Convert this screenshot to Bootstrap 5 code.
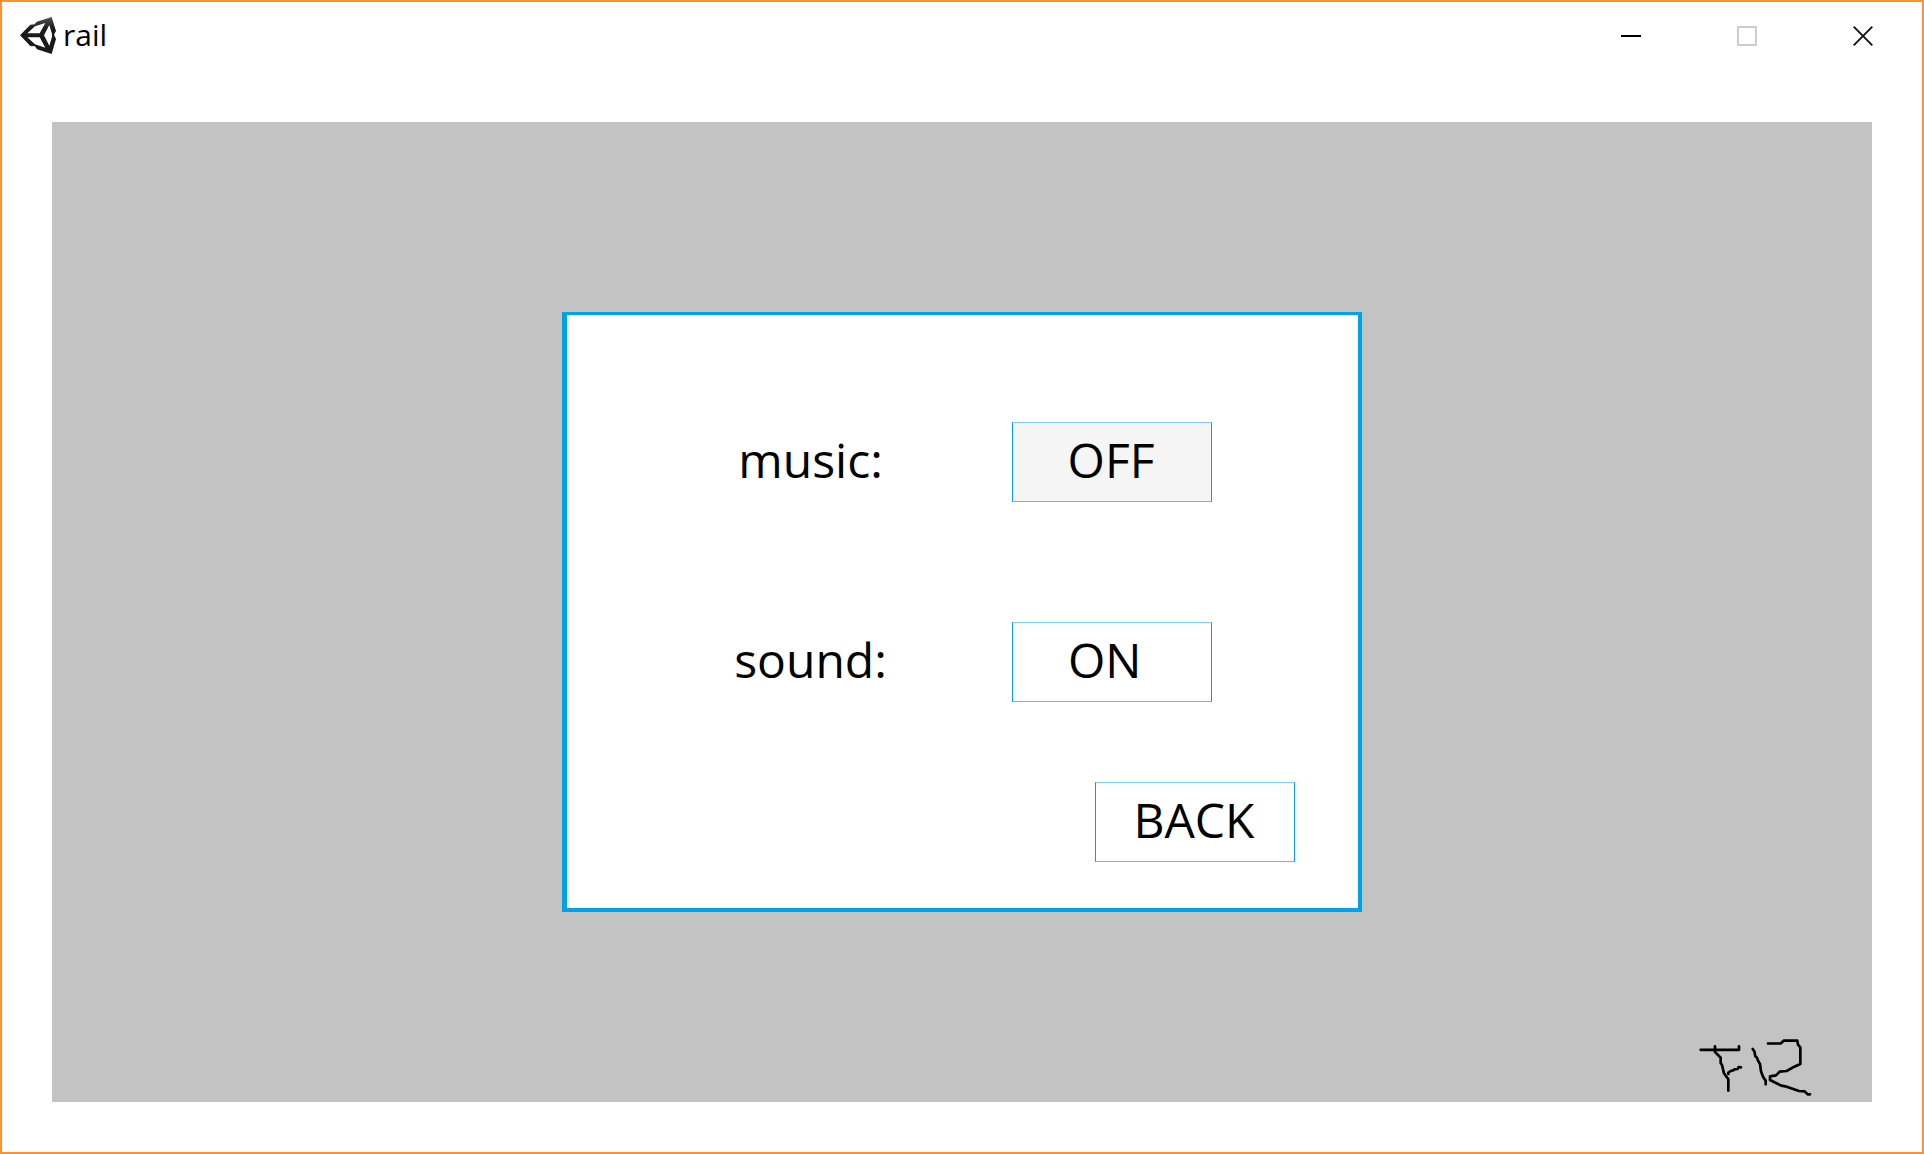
<!DOCTYPE html>
<html lang="en">
<head>
<meta charset="utf-8">
<meta name="viewport" content="width=device-width, initial-scale=1">
<title>rail</title>
<link rel="stylesheet" href="https://cdn.jsdelivr.net/npm/bootstrap@5.3.0/dist/css/bootstrap.min.css">
<style>
  body { font-family: "Open Sans", "Noto Sans", sans-serif; color: #000; }
  .window-frame { border: 2px solid #fa9233; background: #fff; }
  .title-bar { height: 68px; padding: 0 1px 0 18px; }
  .app-title { font-size: 30px; line-height: 40px; padding-bottom: 2px; margin-left: 7px; }
  .caption-btn { width: 116px; border: 0; border-radius: 0; color: #000; }
  .caption-btn:disabled { color: #cccccc; border: 0; opacity: 1; }
  .stage { background: #c3c3c3; margin: 52px 50px 50px; }
  .settings-panel { width: 800px; max-width: 100%; background: #fff; border: solid #00a2e8; border-width: 3px 4px 4px 5px; padding: 107px 63px 46px 145px; }
  .setting-row { gap: 103px; margin-bottom: 120px; }
  .setting-row.last-setting { margin-bottom: 80px; }
  .setting-label { width: 197px; font-size: 48px; line-height: 76px; padding-bottom: 4px; text-align: center; }
  .menu-btn { width: 200px; height: 80px; padding: 0 2px 4px 0; font-size: 48px; line-height: 72px; color: #000; background: #fff; border: 1px solid; border-color: #80d0f4 #0a9ce0 #5abfee #0a9ce0; border-radius: 0; }
  .menu-btn.is-off, .menu-btn:hover { background: #f5f5f5; color: #000; border-color: #80d0f4 #0a9ce0 #5abfee #0a9ce0; }
  .signature { right: 59px; bottom: 5px; }
</style>
<script src="https://cdn.jsdelivr.net/npm/bootstrap@5.3.0/dist/js/bootstrap.bundle.min.js"></script>
</head>
<body>
<div class="window-frame d-flex flex-column min-vh-100">
  <header class="title-bar d-flex align-items-center">
    <svg width="36" height="38" viewBox="60 48 108 114" aria-hidden="true">
      <defs>
        <linearGradient id="cubeShade" x1="0" y1="0" x2="0" y2="1">
          <stop offset="0" stop-color="#555"/><stop offset=".3" stop-color="#1c1c1c"/><stop offset="1" stop-color="#181818"/>
        </linearGradient>
      </defs>
      <path fill="url(#cubeShade)" fill-rule="evenodd" d="M60 103 L91 71 L104 70 L110 62 L155 48 L168 90 L162 101 L168 114 L155 159 L111 145 L105 136 L91 135 Z
        M82 97 L105 76 L136 66 L119 97 Z
        M82 109 L119 109 L136 140 L105 130 Z
        M148 72 L156 99 L156 107 L148 134 L132 103 Z"/>
    </svg>
    <h1 class="app-title fw-normal mb-0">rail</h1>
    <div class="d-flex align-self-stretch ms-auto">
      <button type="button" class="caption-btn btn p-0 d-flex align-items-center justify-content-center" aria-label="Minimize">
        <svg width="20" height="20" viewBox="0 0 20 20"><path d="M0 10H20" stroke="currentColor" stroke-width="2"/></svg>
      </button>
      <button type="button" class="caption-btn btn p-0 d-flex align-items-center justify-content-center" aria-label="Maximize" disabled>
        <svg width="20" height="20" viewBox="0 0 20 20"><path d="M1 1H19V19H1Z" fill="none" stroke="currentColor" stroke-width="2"/></svg>
      </button>
      <button type="button" class="caption-btn btn p-0 d-flex align-items-center justify-content-center" aria-label="Close">
        <svg width="20" height="20" viewBox="0 0 20 20"><path d="M.7 .7L19.3 19.3M19.3 .7L.7 19.3" stroke="#111" stroke-width="1.9"/></svg>
      </button>
    </div>
  </header>

  <main class="stage position-relative flex-grow-1 d-flex align-items-center justify-content-center">
    <section class="settings-panel" aria-label="Settings">
      <div class="setting-row d-flex align-items-center">
        <label class="setting-label" for="musicToggle">music:</label>
        <button type="button" id="musicToggle" class="menu-btn is-off btn">OFF</button>
      </div>
      <div class="setting-row last-setting d-flex align-items-center">
        <label class="setting-label" for="soundToggle">sound:</label>
        <button type="button" id="soundToggle" class="menu-btn btn">ON&nbsp;</button>
      </div>
      <div class="d-flex justify-content-end">
        <button type="button" class="menu-btn btn">BACK</button>
      </div>
    </section>

    <!-- hand-drawn signature -->
    <svg class="signature position-absolute" width="114" height="59" viewBox="57 54 342 177" fill="none" stroke="#000" stroke-width="8" stroke-linecap="round" stroke-linejoin="round" aria-hidden="true">
      <path d="M62 89.500H177V79"/>
      <path d="M105 79V96L122 113V129L126 135L132 160L145 178V212"/>
      <path d="M145 162V158L152 153L160 151L163 148L173 147L176 141L183 142"/>
      <path d="M218 87L223 94L226 109L231 113L234 122L240 132L243 154L249 170L257 182V193"/>
      <path d="M264 70.500H302L311 62H352L354 74L361 82V132L343 140L320 153L299 155L288 166L270 169V180L304 197L320 200L357 213L374 214L383 223H390"/>
    </svg>
  </main>
</div>
</body>
</html>
